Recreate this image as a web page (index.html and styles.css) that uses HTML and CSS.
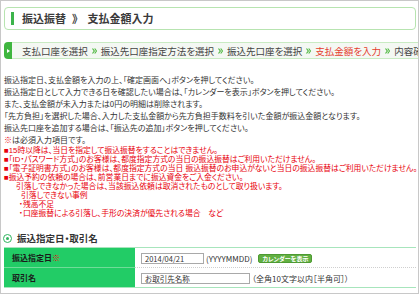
FILE: index.html
```html
<!DOCTYPE html>
<html lang="ja">
<head>
<meta charset="utf-8">
<title>振込振替 支払金額入力</title>
<link rel="stylesheet" href="styles.css">
</head>
<body>
<div class="frame">
  <div class="page-title"><span class="title-bar"></span><h1>振込振替<span class="crumb-sep">》</span>支払金額入力</h1></div>

  <div class="steps">
    <span class="steps-tab"><svg width="3" height="4" viewBox="0 0 3 4"><path d="M0 0 L3 2 L0 4 Z" fill="#fff"/></svg></span>
    <ol class="steps-track">
      <li>支払口座を選択</li>
      <li class="step-sep"><svg width="5" height="6" viewBox="0 0 5 6"><path d="M0.5 0.5 L2.3 3 L0.5 5.5 M2.7 0.5 L4.5 3 L2.7 5.5" fill="none" stroke="#55ba47" stroke-width="1.2"/></svg></li>
      <li>振込先口座指定方法を選択</li>
      <li class="step-sep"><svg width="5" height="6" viewBox="0 0 5 6"><path d="M0.5 0.5 L2.3 3 L0.5 5.5 M2.7 0.5 L4.5 3 L2.7 5.5" fill="none" stroke="#55ba47" stroke-width="1.2"/></svg></li>
      <li>振込先口座を選択</li>
      <li class="step-sep"><svg width="5" height="6" viewBox="0 0 5 6"><path d="M0.5 0.5 L2.3 3 L0.5 5.5 M2.7 0.5 L4.5 3 L2.7 5.5" fill="none" stroke="#55ba47" stroke-width="1.2"/></svg></li>
      <li class="step-current">支払金額を入力</li>
      <li class="step-sep"><svg width="5" height="6" viewBox="0 0 5 6"><path d="M0.5 0.5 L2.3 3 L0.5 5.5 M2.7 0.5 L4.5 3 L2.7 5.5" fill="none" stroke="#55ba47" stroke-width="1.2"/></svg></li>
      <li>内容確認</li>
    </ol>
  </div>

  <div class="guide">
    <p>振込指定日、支払金額を入力の上、「確定画面へ」ボタンを押してください。</p>
    <p>振込指定日として入力できる日を確認したい場合は、「カレンダーを表示」ボタンを押してください。</p>
    <p>また、支払金額が未入力または0円の明細は削除されます。</p>
    <p>「先方負担」を選択した場合、入力した支払金額から先方負担手数料を引いた金額が振込金額となります。</p>
    <p>振込先口座を追加する場合は、「振込先の追加」ボタンを押してください。</p>
    <p><span class="req">※</span>は必須入力項目です。</p>
  </div>

  <ul class="notes">
    <li>■15時以降は、当日を指定して振込振替をすることはできません。</li>
    <li>■「ID・パスワード方式」のお客様は、都度指定方式の当日の振込振替はご利用いただけません。</li>
    <li>■「電子証明書方式」のお客様は、都度指定方式の当日 振込振替のお申込がないと当日の振込振替はご利用いただけません。</li>
    <li>■振込予約の依頼の場合は、前営業日までに振込資金をご入金ください。</li>
    <li class="note-cont">引落しできなかった場合は、当該振込依頼は取消されたものとして取り扱います。</li>
    <li class="note-sub">引落しできない事例</li>
    <li class="note-case">・残高不足</li>
    <li class="note-case">・口座振替による引落し、手形の決済が優先される場合　など</li>
  </ul>

  <h2 class="section-title"><span class="radio"></span>振込指定日・取引名</h2>

  <table class="form">
    <tr>
      <th>振込指定日<span class="req">※</span></th>
      <td><input class="field field-date" type="text" value="2014/04/21"><span class="hint">(YYYYMMDD)</span><button class="cal-btn" type="button">カレンダーを表示</button></td>
    </tr>
    <tr>
      <th>取引名</th>
      <td><input class="field field-name" type="text" value="お取引先名称"><span class="hint">（全角10文字以内［半角可］）</span></td>
    </tr>
  </table>
</div>
</body>
</html>
```

FILE: styles.css
```css
* { box-sizing: border-box; margin: 0; padding: 0; }
html, body { background: #fff; }
body {
  font-family: "Noto Sans CJK JP", "Noto Sans", sans-serif;
  font-feature-settings: "palt";
  color: #333;
}
.frame {
  width: 419px;
  height: 294px;
  border: 1px solid #c8c8c8;
  padding: 6px 2px 0 3px;
  overflow: hidden;
}
.page-title {
  height: 23px;
  border: 1px solid #b7e4b0;
  border-radius: 4px;
  display: flex;
  align-items: center;
  padding-left: 6px;
}
.title-bar {
  width: 3px;
  height: 13px;
  background: #3cb44b;
  margin-right: 8px;
  flex: none;
}
.page-title h1 {
  font-size: 11px;
  font-weight: bold;
  color: #3a3a3a;
  line-height: 1;
  white-space: nowrap;
}
.crumb-sep {
  margin: 0 10px 0 6px;
}
.steps {
  display: flex;
  height: 17px;
  margin-top: 12px;
}
.steps-tab {
  width: 8px;
  flex: none;
  background: #3fb63f;
  border-radius: 4px 0 0 4px;
  display: flex;
  align-items: center;
  justify-content: center;
}
.steps-track {
  flex: 1 0 auto;
  display: flex;
  align-items: center;
  list-style: none;
  border-top: 1px solid #c9ebc3;
  border-bottom: 1px solid #c9ebc3;
  background: #f4f8f3;
  padding-left: 10px;
  white-space: nowrap;
  font-size: 9.5px;
  color: #444;
}
.step-sep {
  display: flex;
  margin: 0 4px;
}
.step-current { color: #e53c2e; }
.guide {
  margin-top: 15px;
  font-size: 8px;
  line-height: 12px;
  white-space: nowrap;
}
.req { color: #e8000b; }
.notes {
  list-style: none;
  font-family: "Liberation Sans", "Noto Sans CJK JP", sans-serif;
  font-size: 7.8px;
  line-height: 9px;
  color: #e8000b;
  white-space: nowrap;
}
.note-cont { padding-left: 12px; }
.note-sub { padding-left: 17px; }
.note-case { padding-left: 15px; }
.section-title {
  margin-top: 14px;
  margin-left: -1px;
  display: flex;
  align-items: center;
  gap: 5px;
  font-size: 9.5px;
  line-height: 12px;
  font-weight: bold;
  color: #333;
}
.radio {
  width: 9px;
  height: 9px;
  border: 1.5px solid #2fb35e;
  border-radius: 50%;
  display: flex;
  align-items: center;
  justify-content: center;
  flex: none;
}
.radio::after {
  content: "";
  width: 3px;
  height: 3px;
  border-radius: 50%;
  background: #2fb35e;
}
.form {
  margin-top: 3px;
  width: 100%;
  border-collapse: collapse;
  border-top: 1px solid #a7e5bc;
  border-bottom: 1px solid #a7e5bc;
}
.form th {
  width: 131px;
  height: 20px;
  background: #22cc66;
  text-align: left;
  padding-left: 8px;
  font-size: 8px;
  font-weight: bold;
  color: #1a1a1a;
  border-bottom: 1px solid #6fdc98;
}
.form td {
  height: 20px;
  padding-left: 6px;
  font-size: 8px;
  color: #333;
  border-bottom: 1px dotted #cfcfcf;
  white-space: nowrap;
}
.form tr:last-child th,
.form tr:last-child td { border-bottom: none; }
.field {
  height: 11px;
  border: 1px solid #a9a9a9;
  font: inherit;
  font-size: 7.5px;
  color: #333;
  padding: 0 3px;
  vertical-align: middle;
  outline: none;
}
.field-date { width: 63px; }
.field-name { width: 109px; }
.hint {
  margin-left: 2px;
  vertical-align: middle;
}
.cal-btn {
  margin-left: 6px;
  height: 9px;
  padding: 0 3px;
  border: 1px solid #4d9a32;
  border-radius: 2px;
  background: #62b042;
  color: #fff;
  font: inherit;
  font-size: 6px;
  font-weight: bold;
  line-height: 7px;
  vertical-align: middle;
}
```
